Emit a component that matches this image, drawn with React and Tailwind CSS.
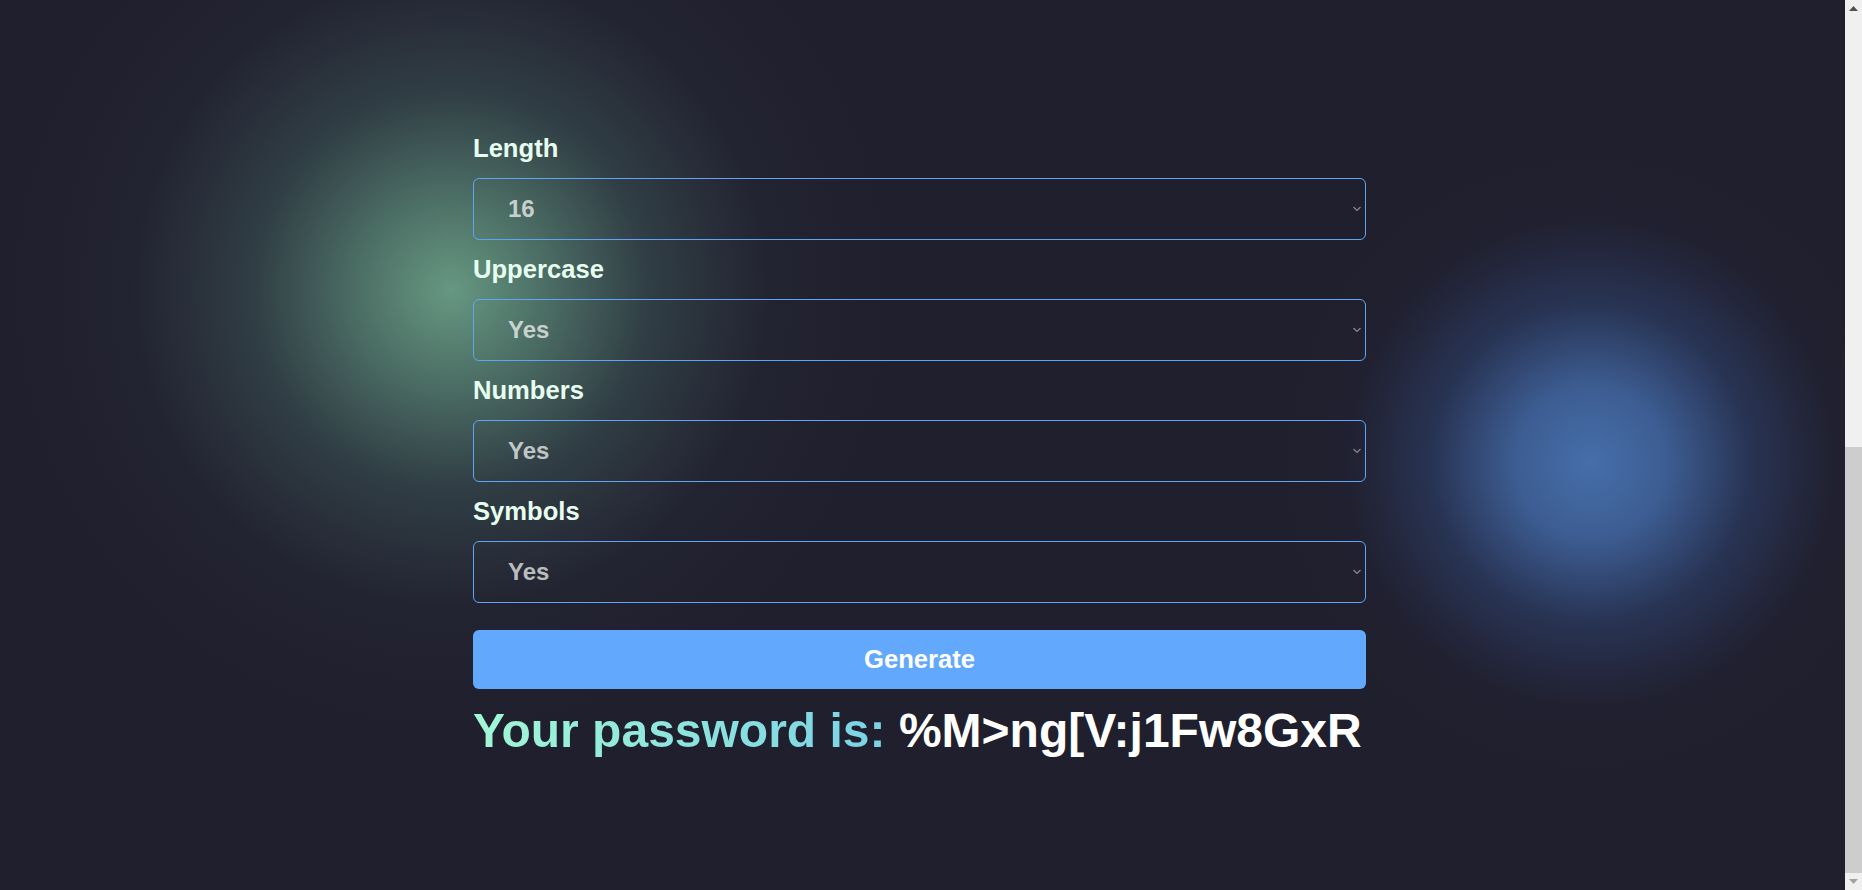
import { useState } from "react";

// ── Password generator ───────────────────────────────────────────────────────

const FIELDS = [
  { label: "Length", value: "16", options: ["8", "12", "16", "24", "32"] },
  { label: "Uppercase", value: "Yes", options: ["Yes", "No"] },
  { label: "Numbers", value: "Yes", options: ["Yes", "No"] },
  { label: "Symbols", value: "Yes", options: ["Yes", "No"] },
];

function Field({ label, value, options }) {
  const [v, setV] = useState(value);
  return (
    <div className="flex flex-col">
      <label className="mt-[15px] mb-[15px] text-[25.6px] leading-[29px] font-bold text-[#e6fdf0]">{label}</label>
      <div className="relative">
        <select
          value={v}
          onChange={e => setV(e.target.value)}
          className="w-full h-[62px] appearance-none rounded-md border border-[#5ea6f5] bg-transparent pl-[34px] text-[24px] font-bold text-white/70 outline-none"
        >
          {options.map(o => (
            <option key={o} value={o} className="bg-[#201f2d]">{o}</option>
          ))}
        </select>
        <svg className="absolute right-[5px] top-1/2 -translate-y-1/2 pointer-events-none" width="8" height="5" viewBox="0 0 8 5">
          <path d="M0.5 0.5 L4 4 L7.5 0.5" fill="none" stroke="#8a8a8f" strokeWidth="1.2" />
        </svg>
      </div>
    </div>
  );
}

function Scrollbar() {
  return (
    <div className="w-[17px] shrink-0 h-full flex flex-col bg-[#f0f0f0]">
      <div className="h-[17px] flex items-center justify-center">
        <svg width="9" height="5" viewBox="0 0 9 5"><path d="M0 5 L4.5 0 L9 5 Z" fill="#505050" /></svg>
      </div>
      <div className="flex-1 flex flex-col">
        <div className="h-[430px]" />
        <div className="flex-1 bg-[#cdcdcd]" />
      </div>
      <div className="h-[17px] flex items-center justify-center">
        <svg width="9" height="5" viewBox="0 0 9 5"><path d="M0 0 L4.5 5 L9 0 Z" fill="#a3a3a3" /></svg>
      </div>
    </div>
  );
}

export default function App() {
  return (
    <div className="flex h-[890px] w-full overflow-hidden bg-[#201f2d]" style={{ fontFamily: '"Liberation Sans", Arial, sans-serif' }}>
      <div className="relative flex-1 h-full overflow-hidden">
        {/* glow blobs */}
        <div className="absolute left-[-49px] top-[-210px] w-[1000px] h-[1000px] rounded-full bg-[radial-gradient(circle,rgba(102,152,130,1)_0%,rgba(90,135,118,0.8)_12%,rgba(64,92,92,0.5)_28%,rgba(44,52,64,0.22)_45%,rgba(32,31,45,0)_62%)]" />
        <div className="absolute left-[1261px] top-[133px] w-[660px] h-[660px] rounded-full bg-[radial-gradient(circle,rgba(70,110,170,1)_0%,rgba(64,100,158,0.9)_16%,rgba(48,72,122,0.5)_34%,rgba(36,42,70,0.15)_52%,rgba(32,31,45,0)_66%)]" />

        <div className="relative ml-[473px] w-[893px] pt-[119px] flex flex-col">
          {FIELDS.map(f => (
            <Field key={f.label} {...f} />
          ))}
          <button className="mt-[27px] h-[59px] w-full rounded-md bg-[#62a9fd] text-[25.6px] font-bold text-white">
            Generate
          </button>
          <p className="mt-[18px] text-[48px] leading-none font-bold whitespace-nowrap">
            <span className="bg-linear-to-r from-[#a2f7d4] to-[#7bd2e6] bg-clip-text text-transparent">Your password is:</span>{" "}
            <span className="text-white">%M&gt;ng[V:j1Fw8GxR</span>
          </p>
        </div>
      </div>
      <Scrollbar />
    </div>
  );
}
